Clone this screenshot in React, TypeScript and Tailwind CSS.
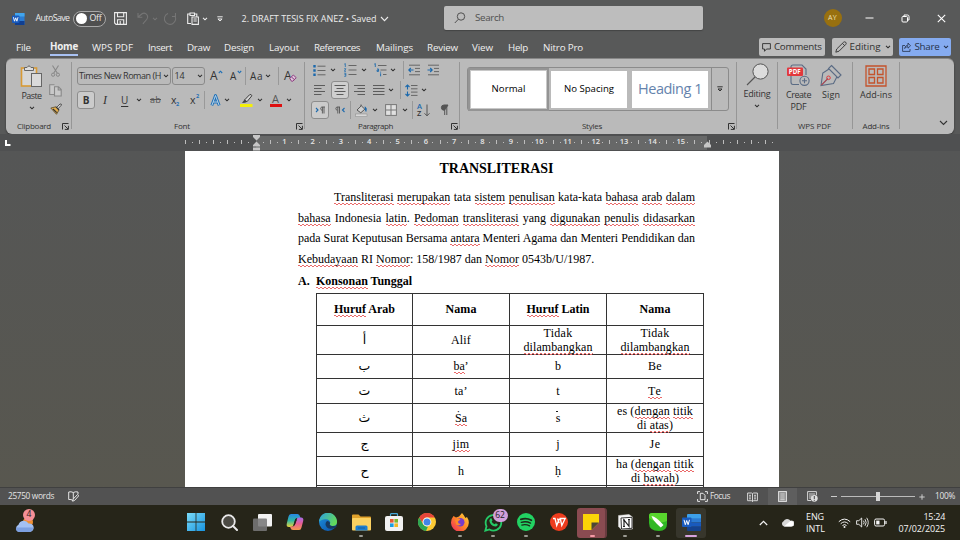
import { useLayoutEffect, useRef, useState } from 'react';
import type { ReactNode } from 'react';

const UI = "font-['Open_Sans','Noto_Sans',sans-serif]";

/* A single line of text whose tracking is adjusted so that it spans w pixels. */
function Fit({ w, className = '', children }: { w: number; className?: string; children: ReactNode }) {
  const ref = useRef<HTMLSpanElement>(null);
  const [spacing, setSpacing] = useState(0);
  useLayoutEffect(() => {
    const el = ref.current;
    if (!el) return;
    const n = (el.textContent || '').length;
    if (n > 0) setSpacing((w - el.getBoundingClientRect().width) / n);
  }, [w]);
  return (
    <span ref={ref} className={`inline-block shrink-0 whitespace-pre ${className}`} style={{ letterSpacing: spacing }}>
      {children}
    </span>
  );
}

function Svg({ w, h, className = '', children }: { w: number; h: number; className?: string; children: ReactNode }) {
  return (
    <svg width={w} height={h} viewBox={`0 0 ${w} ${h}`} fill="none" className={`block shrink-0 ${className}`}>
      {children}
    </svg>
  );
}

function Chev({ className = '' }: { className?: string }) {
  return (
    <Svg w={6} h={4} className={className}>
      <path d="M1 .8 3 2.8 5 .8" stroke="currentColor" strokeWidth="1.1" />
    </Svg>
  );
}

function Launcher({ className = '' }: { className?: string }) {
  return (
    <Svg w={7} h={7} className={className}>
      <path d="M.5 6.5V.5H6.5M2.5 2.5 6 6M6.4 2.8V6.4H2.8" stroke="#333" strokeWidth="1" />
    </Svg>
  );
}

const Divider = () => <div className="mt-[3px] h-[67px] w-px shrink-0 bg-[#969696]" />;

function TitleBar() {
  return (
    <div className="flex h-[37px] items-center text-[#ececec]">
      <Svg w={13} h={12} className="ml-[12px]">
        <rect x="3" y="0" width="9.5" height="12" rx="1" fill="#2b7cd3" />
        <rect x="3" y="0" width="9.5" height="3.5" fill="#41a5ee" />
        <rect x="3" y="8" width="9.5" height="4" fill="#103f91" />
        <rect x="0" y="2.5" width="7.5" height="7.5" rx="1" fill="#185abd" />
        <path d="M1.4 4.2 2.5 8.2 3.7 4.8 4.9 8.2 6 4.2" stroke="#fff" strokeWidth=".9" />
      </Svg>
      <Fit w={34} className="ml-[10.5px] text-[8.8px]">AutoSave</Fit>
      <div className="ml-[3px] flex h-[16px] w-[33px] shrink-0 items-center rounded-full border border-[#a8a8a8] bg-[#4f4f4f] pl-[2px]">
        <div className="h-[11px] w-[11px] shrink-0 rounded-full bg-white" />
        <Fit w={12} className="ml-[3px] text-[8.8px]">Off</Fit>
      </div>
      <Svg w={13} h={13} className="ml-[8px]">
        <path d="M.6 .6H12.4V12.4H2L.6 11ZM3.5.6V4.8H9.7V.6M3.5 12.4V7.8H9.7V12.4M6.2 9v3" stroke="currentColor" strokeWidth="1.1" />
      </Svg>
      <Svg w={12} h={13} className="ml-[10px] text-[#757575]">
        <path d="M1 1V5.3H5.3M1.2 5 4.7 2C8-.5 11 3 10.6 5.5 10.3 8 7 9.5 6 12" stroke="currentColor" strokeWidth="1.1" />
      </Svg>
      <Chev className="ml-[3px] text-[#757575]" />
      <Svg w={13} h={13} className="ml-[6px] text-[#757575]">
        <path d="M11.5 1V4.5H8M4 1.5A5.6 5.6 0 1 0 10.8 3.8" stroke="currentColor" strokeWidth="1.1" />
      </Svg>
      <Svg w={12} h={13} className="ml-[10px]">
        <path d="M4 11.5H.7V2H3M7.5 2H9.8V4.5M3 1H7.5V3.5H3ZM5 5H11.4V12.4H5ZM6.5 7H9.8M6.5 9H9.8" stroke="currentColor" strokeWidth="1.1" />
      </Svg>
      <Chev className="ml-[3px]" />
      <Svg w={6} h={6} className="ml-[9.5px]">
        <path d="M.3.8H5.7M.9 3 3 5 5.1 3Z" stroke="currentColor" strokeWidth="1" />
      </Svg>
      <Fit w={135} className="ml-[18.5px] text-[9px]">2. DRAFT TESIS FIX ANEZ • Saved</Fit>
      <Svg w={9} h={6} className="ml-[3px]">
        <path d="M1 1 4.5 4.6 8 1" stroke="currentColor" strokeWidth="1.1" />
      </Svg>
      <div className="mb-px ml-[55px] flex h-[24px] w-[259px] shrink-0 items-center rounded-[2px] bg-[#bdbdbd] text-[#505050] shadow-[0_1px_1px_#444]">
        <Svg w={12} h={12} className="ml-[10px]">
          <circle cx="7" cy="4.5" r="3.7" stroke="currentColor" />
          <path d="M4.3 7.3.8 11" stroke="currentColor" />
        </Svg>
        <Fit w={29} className="ml-[9.5px] text-[9.8px]">Search</Fit>
      </div>
      <div className="mb-px ml-[121px] flex h-[18px] w-[18px] items-center justify-center rounded-full bg-[#98700f] text-[#eee0b8]">
        <Fit w={9} className="text-[7px]">AY</Fit>
      </div>
      <Svg w={9} h={9} className="ml-[23px]">
        <path d="M.5 4H8.5" stroke="#fff" />
      </Svg>
      <Svg w={9} h={9} className="ml-[27.5px]">
        <rect x="1" y="2.5" width="5.5" height="5.5" rx="1" stroke="#fff" />
        <path d="M3 2V1H6.5Q8 1 8 2.5V6H7" stroke="#fff" />
      </Svg>
      <Svg w={9} h={9} className="ml-[26.5px]">
        <path d="M.8.8 8.2 8.2M8.2.8.8 8.2" stroke="#fff" strokeWidth="1.1" />
      </Svg>
    </div>
  );
}

function Tabs() {
  const tab = 'text-[9.8px]';
  return (
    <div className="flex h-[22px] items-center text-[#f0f0f0]">
      <Fit w={15} className={`ml-[16px] ${tab}`}>File</Fit>
      <div className="mb-[2px] ml-[19px] flex h-[17px] flex-col justify-end">
        <Fit w={28} className="text-[9.8px] leading-[14px] font-bold">Home</Fit>
        <div className="h-[1.5px] w-[28px] bg-[#a9c2f3]" />
      </div>
      <Fit w={41} className={`ml-[14px] ${tab}`}>WPS PDF</Fit>
      <Fit w={24} className={`ml-[15px] ${tab}`}>Insert</Fit>
      <Fit w={23} className={`ml-[15px] ${tab}`}>Draw</Fit>
      <Fit w={30} className={`ml-[14px] ${tab}`}>Design</Fit>
      <Fit w={30} className={`ml-[15px] ${tab}`}>Layout</Fit>
      <Fit w={46} className={`ml-[15px] ${tab}`}>References</Fit>
      <Fit w={37} className={`ml-[16px] ${tab}`}>Mailings</Fit>
      <Fit w={31} className={`ml-[14px] ${tab}`}>Review</Fit>
      <Fit w={21} className={`ml-[14px] ${tab}`}>View</Fit>
      <Fit w={20} className={`ml-[15px] ${tab}`}>Help</Fit>
      <Fit w={40} className={`ml-[15px] ${tab}`}>Nitro Pro</Fit>
      <div className="mb-[2px] ml-[175.5px] flex h-[18px] w-[66.5px] shrink-0 items-center rounded-[2px] bg-[#bcbcbc] text-[#303030]">
        <Svg w={9} h={9} className="ml-[3.5px]">
          <path d="M.6.6H8.4V6H4.5L2.5 8.3V6H.6Z" stroke="currentColor" strokeWidth=".9" />
        </Svg>
        <Fit w={47.5} className="ml-[3px] text-[9.8px]">Comments</Fit>
      </div>
      <div className="mb-[2px] ml-[6.5px] flex h-[18px] w-[61.5px] shrink-0 items-center rounded-[2px] bg-[#bcbcbc] text-[#303030]">
        <Svg w={12} h={12} className="ml-[3px]">
          <path d="M.8 11.2 1.7 8 8.5 1.3Q9.7.3 10.8 1.3 11.7 2.4 10.7 3.5L4 10.2ZM7.5 2.5 9.7 4.6" stroke="currentColor" strokeWidth=".9" />
        </Svg>
        <Fit w={31} className="ml-[3px] text-[9.8px]">Editing</Fit>
        <Chev className="ml-[4px]" />
      </div>
      <div className="mb-[2px] ml-[6px] flex h-[18px] w-[52px] shrink-0 items-center rounded-[2px] bg-[#85abf0] text-[#26324a]">
        <Svg w={9} h={10} className="ml-[3px]">
          <path d="M3 3.5H.6V9.4H8V7M2.7 6.5C3 4.3 4.3 3.3 6 3.2V1L8.5 3.8 6 6.2V4.7C4.6 4.7 3.5 5.3 2.7 6.5Z" stroke="currentColor" strokeWidth=".8" />
        </Svg>
        <Fit w={25} className="ml-[3.5px] text-[9.8px]">Share</Fit>
        <Chev className="ml-[3.5px]" />
      </div>
    </div>
  );
}

function Clipboard() {
  return (
    <div className="flex w-[65px] shrink-0 flex-col">
      <div className="flex h-[60px]">
        <div className="ml-[14px] flex w-[23px] flex-col items-center pt-[5px]">
          <Svg w={23} h={25}>
            <rect x="1.5" y="4" width="15" height="18" fill="#d6d6d6" stroke="#d89a35" strokeWidth="1.6" />
            <path d="M4.5 6.5V3.5H7Q9 .3 11 3.5H13.5V6.5Z" fill="#ddd" stroke="#666" />
            <rect x="11.5" y="9.5" width="10" height="13" fill="#dadada" stroke="#666" />
          </Svg>
          <Fit w={20} className="mt-[1px] text-[9px] leading-[12px]">Paste</Fit>
          <Chev className="mt-[4px]" />
        </div>
        <div className="ml-[6px] flex w-[13px] flex-col items-center">
          <Svg w={9} h={12} className="mt-[6px]">
            <path d="M1.5.5 6.2 8M7.5.5 2.8 8" stroke="#888" strokeWidth="1.1" />
            <circle cx="2.1" cy="9.7" r="1.6" stroke="#888" />
            <circle cx="6.9" cy="9.7" r="1.6" stroke="#888" />
          </Svg>
          <Svg w={13} h={13} className="mt-[7px]">
            <path d="M5 10.5H.7V.7H5.5M5.5 2.7H9.5L12.2 5.5V12H5.5ZM9.2 3V6H12" stroke="#888" strokeWidth="1.1" fill="#c9c9c9" />
          </Svg>
          <Svg w={12} h={12} className="mt-[6px]">
            <path d="M6.8 4.3 10 1Q11.5.5 11.5 2L8.2 5.6" fill="#ddd" stroke="#444" strokeWidth=".9" />
            <path d="M.8 5 6 3.8 9 7 6.5 11.3Z" fill="#e2ad4d" stroke="#5b4a28" strokeWidth=".8" />
            <path d="M3 6 6.8 9.7M6 3.8 9 7" stroke="#333" strokeWidth="1.1" />
          </Svg>
        </div>
      </div>
      <div className="flex h-[14px] items-center">
        <Fit w={34} className="ml-[11px] text-[8px]">Clipboard</Fit>
        <Launcher className="ml-[11px]" />
      </div>
    </div>
  );
}

function FontGroup() {
  return (
    <div className="flex w-[232px] shrink-0 flex-col pt-[8px]">
      <div className="flex h-[18px] items-center">
        <div className="ml-[5px] flex h-[18px] w-[94px] shrink-0 items-center rounded-[3px] border border-[#8a8a8a]">
          <Fit w={82} className="ml-[1px] text-[9px]">Times New Roman (H</Fit>
          <Chev className="ml-[2px]" />
        </div>
        <div className="ml-[1px] flex h-[18px] w-[33px] shrink-0 items-center rounded-[3px] border border-[#8a8a8a]">
          <Fit w={10} className="ml-[1.5px] text-[9px]">14</Fit>
          <Chev className="ml-[12.5px]" />
        </div>
        <Fit w={8} className="ml-[5px] text-[12px]">A</Fit>
        <Svg w={5} h={4} className="mb-[9px]"><path d="M.8 3 2.5 1.2 4.2 3" stroke="#1f6fb5" strokeWidth="1.1" /></Svg>
        <Fit w={7} className="ml-[7px] pt-[1px] text-[10px]">A</Fit>
        <Svg w={5} h={4} className="mb-[9px]"><path d="M.8 1 2.5 2.8 4.2 1" stroke="#1f6fb5" strokeWidth="1.1" /></Svg>
        <div className="ml-[3px] h-[18px] w-px bg-[#999]" />
        <Fit w={13} className="ml-[4px] text-[10px]">Aa</Fit>
        <Chev className="ml-[2px]" />
        <div className="ml-[7px] h-[18px] w-px bg-[#999]" />
        <Fit w={7} className="ml-[5px] pb-[1px] text-[12px]">A</Fit>
        <Svg w={8} h={8} className="mt-[4px] -ml-[2px]">
          <path d="M.8 4.5 4.3 1 7.2 3.7 3.8 7.2H2.5Z" fill="#dcc5d9" stroke="#8d3a80" />
          <path d="M2.5 3 5.5 5.7" stroke="#8d3a80" />
        </Svg>
      </div>
      <div className="mt-[6px] flex h-[18px] items-center">
        <div className="ml-[5px] flex h-[18px] w-[18px] shrink-0 items-center justify-center rounded-[3px] border border-[#8d8d8d] bg-[#cbcbcb] text-[10px] font-bold">B</div>
        <span className="ml-[8px] w-[5px] font-['Liberation_Serif',serif] text-[12px] italic">I</span>
        <span className="ml-[13px] w-[8px] text-[10px] underline underline-offset-2">U</span>
        <Chev className="ml-[7px]" />
        <Fit w={11} className="ml-[8px] text-[9px] text-[#555] line-through">ab</Fit>
        <span className="ml-[10px] w-[5px] text-[10.5px] leading-[14px]">x</span>
        <span className="mt-[8px] w-[4px] text-[5.5px] font-bold text-[#1f6fb5]">2</span>
        <span className="ml-[10px] w-[6px] text-[10.5px] leading-[14px]">x</span>
        <span className="mb-[8px] w-[4px] text-[5.5px] font-bold text-[#1f6fb5]">2</span>
        <div className="ml-[4px] h-[18px] w-px bg-[#999]" />
        <Svg w={11} h={13} className="ml-[5px]">
          <path d="M1.8 11.5 5.5 1.5 9.2 11.5M3.2 8H7.8" stroke="#1c6fb8" strokeWidth="2.8" strokeLinejoin="round" />
          <path d="M1.8 11.5 5.5 1.5 9.2 11.5M3.2 8H7.8" stroke="#c9dbe9" strokeWidth=".9" strokeLinejoin="round" />
        </Svg>
        <Chev className="ml-[3px]" />
        <Svg w={13} h={13} className="ml-[10px]">
          <path d="M4.5 6 9.5.8Q11.4-.3 11.8 1.8L7 7.7Z" fill="#d6d6d6" stroke="#3c3c3c" />
          <path d="M4.3 5.8 7.2 7.8 5 8.7 2 9Z" fill="#444" />
          <rect x="0" y="10" width="12.5" height="3" fill="#f4ef08" />
        </Svg>
        <Chev className="ml-[4px]" />
        <div className="ml-[6px] flex h-[14px] w-[13px] flex-col items-center justify-end">
          <span className="text-[11px] leading-[10px] text-[#555]">A</span>
          <div className="h-[3px] w-[12px] bg-[#de1010]" />
        </div>
        <Chev className="ml-[4px]" />
      </div>
      <div className="mt-[10px] flex h-[14px] items-center">
        <Fit w={16} className="ml-[102px] text-[8px]">Font</Fit>
        <Launcher className="ml-[106px]" />
      </div>
    </div>
  );
}

const Lines = ({ d }: { d: string }) => (
  <Svg w={12} h={12}>
    <path d={d} stroke="#5c5c5c" strokeWidth="1" />
  </Svg>
);

function ParagraphGroup() {
  return (
    <div className="flex w-[154px] shrink-0 flex-col pt-[2px]">
      <div className="flex h-[18px] items-center">
        <Svg w={13} h={13} className="ml-[8px]">
          <path d="M4.5 2.2H12.5M4.5 6.5H12.5M4.5 10.8H12.5" stroke="#666" />
          <path d="M.3 1h2.4v2.4H.3ZM.3 5.3h2.4v2.4H.3ZM.3 9.6h2.4V12H.3Z" fill="#1b69ad" />
        </Svg>
        <Chev className="ml-[4px]" />
        <Svg w={13} h={14} className="ml-[8px]">
          <path d="M4.5 2.5H12.5M4.5 7H12.5M4.5 11.5H12.5" stroke="#666" />
          <path d="M.3 1.2 1.3.5V4M.2 5.7H1.8L.4 8.3H2M.2 10.2H1.8V13.3H.2M.5 11.6H1.8" stroke="#1b69ad" strokeWidth=".8" />
        </Svg>
        <Chev className="ml-[4px]" />
        <Svg w={13} h={14} className="ml-[7px]">
          <path d="M4 2.5H12.5M6.5 7H12.5M9 11.5H12.5" stroke="#666" />
          <path d="M.3 1.2 1.3.5V4M3 6H4.6V8.4H3V7.2H4.6M6.6 10.3V13.3M6.6 8.7v.9" stroke="#1b69ad" strokeWidth=".9" />
        </Svg>
        <Chev className="ml-[3px]" />
        <div className="ml-[7px] h-[18px] w-px bg-[#999]" />
        <Svg w={12} h={12} className="ml-[4px]">
          <path d="M1 1.2H12M7 4.4H12M7 7.6H12M1 10.8H12" stroke="#666" />
          <path d="M5.5 6H.8M2.8 4 .8 6l2 2" stroke="#1b69ad" strokeWidth="1.1" />
        </Svg>
        <Svg w={12} h={12} className="ml-[7px]">
          <path d="M1 1.2H12M7 4.4H12M7 7.6H12M1 10.8H12" stroke="#666" />
          <path d="M.5 6H5.2M3.2 4l2 2-2 2" stroke="#1b69ad" strokeWidth="1.1" />
        </Svg>
      </div>
      <div className="mt-[2px] flex h-[18px] items-center">
        <div className="w-[9px]" />
        <Lines d="M0 1.5H11M0 4.5H7.5M0 7.5H11M0 10.5H7.5" />
        <div className="ml-[5px] flex h-[18px] w-[18px] items-center justify-center rounded-[3px] border border-[#8d8d8d] bg-[#cfcfcf]">
          <Lines d="M.5 1.5H11.5M2.5 4.5H9.5M.5 7.5H11.5M2.5 10.5H9.5" />
        </div>
        <div className="w-[4px]" />
        <Lines d="M1 1.5H12M4.5 4.5H12M1 7.5H12M4.5 10.5H12" />
        <div className="w-[8px]" />
        <Lines d="M0 1.5H11.5M0 4.5H11.5M0 7.5H11.5M0 10.5H11.5" />
        <Chev className="ml-[3px]" />
        <div className="ml-[6px] h-[18px] w-px bg-[#999]" />
        <Svg w={13} h={13} className="ml-[4px]">
          <path d="M6 1.5H12.5M6 4.8H12.5M6 8.1H12.5M6 11.4H12.5" stroke="#666" />
          <path d="M2.5 1V5.5M.5 3 2.5 1 4.5 3M2.5 7.5V12M.5 10 2.5 12 4.5 10" stroke="#1b69ad" strokeWidth="1.1" />
        </Svg>
        <Chev className="ml-[3px]" />
      </div>
      <div className="mt-[2px] flex h-[18px] items-center">
        <div className="ml-[6px] flex h-[18px] w-[18px] items-center justify-center rounded-[3px] border border-[#8d8d8d] bg-[#cbcbcb]">
          <Svg w={11} h={8}>
            <path d="M1 2 3 4 1 6" stroke="#1b69ad" strokeWidth="1.1" />
            <path d="M10 1H6.8A1.7 1.7 0 0 0 6.8 4.2H7.2M7.4 1V7.5M9 1V7.5" stroke="#555" strokeWidth=".9" />
          </Svg>
        </div>
        <Svg w={11} h={8} className="ml-[6px]">
          <path d="M9.5 2 7.5 4 9.5 6" stroke="#1b69ad" strokeWidth="1.1" />
          <path d="M5 1H2A1.7 1.7 0 0 0 2 4.2H2.4M2.8 1V7.5M4.5 1V7.5" stroke="#555" strokeWidth=".9" />
        </Svg>
        <div className="ml-[4px] h-[18px] w-px bg-[#999]" />
        <Svg w={13} h={13} className="ml-[4px]">
          <path d="M2 6 6.3 1.8 9.8 5.2 5.8 8.8ZM6 2V.5" fill="#d0d0d0" stroke="#555" />
          <path d="M10 2.8Q12.3 4 11 7.5L10 5.5Z" fill="#1b69ad" stroke="#1b69ad" strokeWidth=".6" />
          <rect x=".5" y="10" width="11.5" height="2.6" fill="#d8d8d8" stroke="#888" strokeWidth=".5" />
        </Svg>
        <Chev className="ml-[4px]" />
        <Svg w={12} h={12} className="ml-[7px]">
          <rect x=".6" y=".6" width="10.8" height="10.8" fill="#e0e0e0" stroke="#777" />
          <path d="M6 1V11M1 6H11" stroke="#777" />
        </Svg>
        <Chev className="ml-[5px]" />
        <div className="ml-[4px] h-[18px] w-px bg-[#999]" />
        <div className="ml-[4px] flex w-[7px] flex-col text-[7.5px] leading-[7px] font-semibold">
          <span className="text-[#1b69ad]">A</span>
          <span>Z</span>
        </div>
        <Svg w={6} h={13}><path d="M3 .5V12M.5 9.3 3 11.8 5.5 9.3" stroke="#555" /></Svg>
        <Svg w={9} h={12} className="ml-[10px]">
          <path d="M8 1H4A2.6 2.6 0 0 0 4 6.2H4.5ZM4.7 1V11M6.8 1V11" fill="#555" stroke="#555" />
        </Svg>
      </div>
      <div className="flex h-[14px] items-center">
        <Fit w={35} className="ml-[53px] text-[8px]">Paragraph</Fit>
        <Launcher className="ml-[58px]" />
      </div>
    </div>
  );
}

function StylesGroup() {
  return (
    <div className="flex w-[276px] shrink-0 flex-col pt-[8px]">
      <div className="ml-[7px] flex h-[44px] w-[262px] items-center rounded-[3px] border border-[#8b8b8b]">
        <div className="flex h-[43px] w-[81px] shrink-0 items-center justify-center border-[2px] border-[#949494] bg-[#c8c8c8]">
          <div className="flex h-[37px] w-[75px] items-center justify-center bg-white text-black">
            <Fit w={34} className="text-[9.6px]">Normal</Fit>
          </div>
        </div>
        <div className="ml-[2px] flex h-[37px] w-[76px] shrink-0 items-center justify-center bg-white text-black">
          <Fit w={50} className="text-[9.6px]">No Spacing</Fit>
        </div>
        <div className="ml-[5px] flex h-[37px] w-[76px] shrink-0 items-center justify-center bg-white text-[#6583ad]">
          <Fit w={64} className="text-[14.5px]">Heading 1</Fit>
        </div>
        <div className="ml-[3px] flex h-[42px] w-[17px] items-center justify-center border-l border-[#8b8b8b]">
          <Svg w={6} h={6}><path d="M.3.8H5.7M1 3 3 5 5 3Z" stroke="#333" strokeWidth="1" /></Svg>
        </div>
      </div>
      <div className="mt-[8px] flex h-[14px] items-center">
        <Fit w={20} className="ml-[122px] text-[8px]">Styles</Fit>
        <Launcher className="ml-[125.5px]" />
      </div>
    </div>
  );
}

function Ribbon() {
  return (
    <div className="mx-[6px] flex h-[75px] rounded-[6px] bg-[#bababa] text-[#333] shadow-[0_1px_2px_#333,0_-1px_0_#8d8d8d]">
      <Clipboard />
      <Divider />
      <FontGroup />
      <Divider />
      <ParagraphGroup />
      <Divider />
      <StylesGroup />
      <Divider />
      <div className="flex w-[40px] shrink-0 flex-col items-center">
        <Svg w={23} h={23} className="mt-[4px]">
          <circle cx="14.5" cy="8.5" r="7.6" fill="#dcdcdc" stroke="#555" />
          <path d="M9 14 1 22" stroke="#555" strokeWidth="1.1" />
        </Svg>
        <Fit w={27} className="mt-[2px] text-[9px] leading-[12px]">Editing</Fit>
        <Chev className="mt-[4px]" />
      </div>
      <Divider />
      <div className="flex w-[74px] shrink-0 flex-col">
        <div className="flex h-[60px]">
          <div className="ml-[7px] flex w-[27px] flex-col items-center pt-[5px]">
            <Svg w={23} h={23}>
              <path d="M4 4V3Q4 1 6 1H15L19 5V11M4 12V18Q4 20.5 6 20.5H12" stroke="#5a6b84" strokeWidth="1.1" />
              <circle cx="17.5" cy="16.8" r="4.6" stroke="#5a6b84" strokeWidth="1.1" />
              <path d="M17.5 14.3V19.3M15 16.8H20" stroke="#5a6b84" strokeWidth="1.1" />
              <rect x="0" y="3.5" width="16" height="8.5" rx="1" fill="#e2393c" />
              <text x="1.8" y="10" fontSize="6.2" fontWeight="700" fill="#fff" fontFamily="Open Sans">PDF</text>
            </Svg>
            <Fit w={25} className="mt-[2px] text-[9px] leading-[12px]">Create</Fit>
            <Fit w={16} className="text-[9px] leading-[12px]">PDF</Fit>
          </div>
          <div className="ml-[8px] flex w-[22px] flex-col items-center pt-[5px]">
            <Svg w={22} h={23}>
              <path d="M11.5 1.5 21 11 18 14 8.5 4.5ZM9 5 2.8 9 1 21.5 13.5 19.5 16.8 13M1.5 21 8 14.5" stroke="#5a6b84" strokeWidth="1.1" />
              <circle cx="8.5" cy="13.8" r="1.8" stroke="#e2393c" />
              <path d="M7.2 15.2 1.3 21.2" stroke="#e2393c" />
            </Svg>
            <Fit w={18} className="mt-[2px] text-[9px] leading-[12px]">Sign</Fit>
          </div>
        </div>
        <Fit w={33} className="ml-[20px] self-start text-[8px] leading-[14px]">WPS PDF</Fit>
      </div>
      <Divider />
      <div className="flex w-[46px] shrink-0 flex-col items-center">
        <Svg w={22} h={22} className="mt-[6px]">
          <path d="M1 1H21V21H1ZM4 4H9.5V9.5H4ZM12.5 4H18V9.5H12.5ZM4 12.5H9.5V18H4ZM12.5 12.5H18V18H12.5Z" stroke="#c4532c" strokeWidth="1.3" />
        </Svg>
        <Fit w={32} className="mt-[2px] text-[9px] leading-[12px]">Add-ins</Fit>
        <Fit w={27} className="mt-[18px] text-[8px] leading-[14px]">Add-ins</Fit>
      </div>
      <Divider />
      <Svg w={9} h={6} className="mt-[61px] ml-[39px]">
        <path d="M1 1 4.5 4.5 8 1" stroke="#333" strokeWidth="1.1" />
      </Svg>
    </div>
  );
}

function Ruler() {
  return (
    <div className="relative flex h-[17px] items-center overflow-hidden bg-[#4f5051]">
      <Svg w={6} h={6} className="ml-[5px]"><path d="M1 0V5H5.5" stroke="#fff" strokeWidth="2" /></Svg>
      <div className="ml-[245px] h-[14px] w-[451px] shrink-0 bg-[#676868]" />
      <div className="absolute top-0 left-[181.7px] flex h-[16px] items-center">
        {Array.from({ length: 84 }, (_, k) => {
          const q = k - 10;
          const label = q > 0 && q % 4 === 0 && q <= 60;
          return (
            <div key={k} className="flex h-[14px] w-[7.0875px] shrink-0 items-center justify-center text-[7.5px] font-semibold text-[#e6e6e6]">
              {label ? <span>{q / 4}</span> : q === 0 ? null : k % 2 === 0 ? <div className="h-[4px] w-px bg-[#bdbdbd]" /> : <div className="h-px w-px bg-[#bdbdbd]" />}
            </div>
          );
        })}
      </div>
      <Svg w={8} h={17} className="absolute top-0 left-[252.5px]">
        <path d="M0 1H7V3L3.5 6.5 0 3ZM3.5 7.5 7 11V12.5H0V11ZM0 13.5H7V16.5H0Z" fill="#c6c6c6" />
      </Svg>
      <Svg w={8} h={17} className="absolute top-0 left-[703.5px]">
        <path d="M3.5 7.5 7 11V13.5H0V11Z" fill="#c6c6c6" />
      </Svg>
    </div>
  );
}

/* A word flagged by the spelling checker: two offset rows of dashes make the squiggle. */
const S = ({ children }: { children: ReactNode }) => (
  <span className="bg-[linear-gradient(90deg,#ea6a6a_50%,transparent_50%),linear-gradient(90deg,transparent_50%,#ea6a6a_50%)] [background-size:4px_1px] [background-position:0_calc(100%-1px),0_100%] bg-repeat-x pb-[1px]">{children}</span>
);

const cell = 'flex flex-col items-center justify-center border-r border-b border-[#333] text-center';

function Row({ className, cells }: { className: string; cells: ReactNode[] }) {
  return (
    <div className={`grid shrink-0 grid-cols-[96px_97px_97px_97px] text-[12px] leading-[14px] ${className}`}>
      {cells.map((c, i) => (
        <div key={i} className={cell}>{c}</div>
      ))}
    </div>
  );
}

const Ar = ({ children }: { children: ReactNode }) => (
  <span className="font-['DejaVu_Sans',sans-serif] text-[12.5px]" lang="ar">{children}</span>
);

function Page() {
  return (
    <div className="ml-[185px] flex h-[336px] w-[594px] flex-col overflow-hidden bg-white pl-[113px] font-['Liberation_Serif',serif] text-[12px] text-black">
      <div className="mt-[8px] flex h-[18px] w-[397px] shrink-0 items-center justify-center">
        <Fit w={114} className="text-[14px] font-bold">TRANSLITERASI</Fit>
      </div>
      <div className="mt-[10px] flex w-[397px] shrink-0 flex-col leading-[20.7px] whitespace-nowrap [text-align-last:justify]">
        <div className="pl-[36px]"><S>Transliterasi</S> <S>merupakan</S> tata <S>sistem</S> <S>penulisan</S> kata-kata <S>bahasa</S> <S>arab</S> <S>dalam</S></div>
        <div><S>bahasa</S> Indonesia <S>latin</S>. <S>Pedoman</S> <S>transliterasi</S> yang <S>digunakan</S> <S>penulis</S> <S>didasarkan</S></div>
        <div className="tracking-[-0.04px]">pada Surat Keputusan Bersama <S>antara</S> Menteri Agama dan Menteri Pendidikan dan</div>
        <div className="w-[296px]"><S>Kebudayaan</S> RI <S>Nomor</S>: 158/1987 dan <S>Nomor</S> 0543b/U/1987.</div>
      </div>
      <div className="mt-[1px] flex h-[20px] shrink-0 items-center font-bold">
        <Fit w={12}>A.</Fit>
        <Fit w={96} className="ml-[6px]"><S>Konsonan</S> Tunggal</Fit>
      </div>
      <div className="mt-[2px] ml-[18px] flex w-[388px] shrink-0 flex-col border-t border-l border-[#333]">
        <Row className="h-[32px] font-bold" cells={[
          <Fit w={61}><S>Huruf</S> Arab</Fit>, <Fit w={31}>Nama</Fit>, <Fit w={63}><S>Huruf</S> Latin</Fit>, <Fit w={31}>Nama</Fit>]} />
        <Row className="h-[29px]" cells={[
          <Ar>أ</Ar>, <Fit w={20}>Alif</Fit>,
          <><Fit w={29}>Tidak</Fit><Fit w={69}><S>dilambangkan</S></Fit></>,
          <><Fit w={29}>Tidak</Fit><Fit w={69}><S>dilambangkan</S></Fit></>]} />
        <Row className="h-[24px]" cells={[<Ar>ب</Ar>, <Fit w={15}><S>ba</S>’</Fit>, 'b', <Fit w={14}>Be</Fit>]} />
        <Row className="h-[25px]" cells={[<Ar>ت</Ar>, <Fit w={13}>ta’</Fit>, 't', <Fit w={14}><S>Te</S></Fit>]} />
        <Row className="h-[28px]" cells={[<Ar>ث</Ar>, <Fit w={12}><S>Ṡa</S></Fit>, <span className="flex flex-col items-center"><span className="h-[1.5px] w-[1.5px] -translate-x-[1px] rounded-full bg-black" /><span className="leading-[13px]">s</span></span>,
          <><Fit w={76}>es (<S>dengan</S> <S>titik</S></Fit><Fit w={36}>di <S>atas</S>)</Fit></>]} />
        <Row className="h-[25px]" cells={[<Ar>ج</Ar>, <Fit w={17}><S>jim</S></Fit>, 'j', <Fit w={11}>Je</Fit>]} />
        <Row className="h-[28px]" cells={[<Ar>ح</Ar>, 'h', 'ḥ',
          <><Fit w={78}>ha (<S>dengan</S> <S>titik</S></Fit><Fit w={48}>di <S>bawah</S>)</Fit></>]} />
        <Row className="h-[20px]" cells={['', '', '', '']} />
      </div>
    </div>
  );
}

function StatusBar() {
  return (
    <div className="flex h-[18px] items-center border-t border-[#404040] bg-[#525252] text-[#e4e4e4]">
      <Fit w={46} className="mb-px ml-[8px] text-[8.3px]">25750 words</Fit>
      <Svg w={11} h={11} className="ml-[14px]">
        <path d="M5.3 1.5V8M5.3 1.5Q3 .3.7 1V8.5Q3 8 5 9.5M5.3 1.5Q7.5.3 10 1V3M4.6 10.2 5.2 8 9.7 3.4 10.7 4.8 6.5 9.5Z" stroke="currentColor" strokeWidth="1" />
      </Svg>
      <Svg w={11} h={11} className="ml-[618px]">
        <path d="M3 .6H.6V3M8 .6H10.4V3M.6 8V10.4H3M10.4 8V10.4H8M3.3 2.3H6L8 4.3V8.7H3.3Z" stroke="currentColor" />
      </Svg>
      <Fit w={20} className="mb-px ml-[2px] text-[8.3px]">Focus</Fit>
      <Svg w={11} h={10} className="ml-[17px]">
        <path d="M5.5 1.5V9.5M.6 1H4.5L5.5 1.7 6.5 1H10.4V8.7H6.5L5.5 9.5 4.5 8.7H.6ZM2 3.3H4M2 5H4M2 6.8H4M7 3.3H9M7 5H9M7 6.8H9" stroke="currentColor" strokeWidth=".9" />
      </Svg>
      <div className="ml-[10px] flex h-[17px] w-[29px] shrink-0 items-center justify-center bg-[#5e5e5e]">
        <Svg w={9} h={11}>
          <rect x=".6" y=".6" width="7.8" height="9.8" fill="#8b8b8b" stroke="currentColor" />
          <path d="M2.3 3H6.7M2.3 5H6.7M2.3 7H6.7M2.3 8.7H6.7" stroke="currentColor" strokeWidth=".8" />
        </Svg>
      </div>
      <Svg w={11} h={11} className="ml-[10px]">
        <path d="M4 9.5H.6V.6H9.4V4M2 3H8M2 5H5M2 7H4" stroke="currentColor" strokeWidth=".9" />
        <circle cx="7.3" cy="7.3" r="3.4" fill="#dedede" />
        <path d="M7.3 5V8M7.3 8.8v1" stroke="#444" />
      </Svg>
      <div className="ml-[13px] h-px w-[6px] shrink-0 bg-[#ccc]" />
      <div className="ml-[4px] h-px w-[35px] shrink-0 bg-[#bbb]" />
      <div className="h-[9px] w-[4px] shrink-0 bg-[#d6d6d6]" />
      <div className="h-px w-[35px] shrink-0 bg-[#bbb]" />
      <Svg w={6} h={6} className="ml-[4px]"><path d="M3 .3V5.7M.3 3H5.7" stroke="#ccc" /></Svg>
      <Fit w={20} className="mb-px ml-[10px] text-[8.3px]">100%</Fit>
    </div>
  );
}

function TaskButton({ mark = '', className = '', children }: { mark?: string; className?: string; children: ReactNode }) {
  return (
    <div className="relative flex w-[33px] shrink-0 items-center justify-center">
      <div className={`flex h-[30px] w-[30px] items-center justify-center rounded-[3px] pb-px ${className}`}>{children}</div>
      {mark && <div className={`absolute bottom-[3px] h-[2px] rounded-full ${mark}`} />}
    </div>
  );
}

function Taskbar() {
  const dot = 'w-[4px] bg-[#9b9b93]';
  return (
    <div className="flex h-[35px] items-center bg-[#262519] text-[#f4f4f4]">
      <div className="relative ml-[15px] h-[24px] w-[22px] shrink-0">
        <Svg w={22} h={24} className="-mt-px">
          <circle cx="13" cy="12" r="5" fill="#ee8f34" />
          <path d="M4 22A3.8 3.8 0 0 1 3.5 14.8 5.5 5.5 0 0 1 13.5 13.5 4.3 4.3 0 1 1 14.5 22Z" fill="#a3c0f2" />
          <path d="M4 22A3.8 3.8 0 0 1 1 17.5H18A4 4 0 0 1 14.5 22Z" fill="#7da0e0" />
        </Svg>
        <div className="absolute top-[-2px] left-[8px] flex h-[12px] w-[12px] items-center justify-center rounded-full bg-[#f58f97] text-[8.5px] text-[#222]">4</div>
      </div>
      <div className="ml-[142.5px] flex h-[35px] shrink-0">
        <TaskButton>
          <Svg w={18} h={18}>
            <defs><linearGradient id="win" x1="0" y1="0" x2="1" y2="1"><stop stopColor="#7bdcf9" /><stop offset="1" stopColor="#1793df" /></linearGradient></defs>
            <path d="M0 0H8.6V8.6H0ZM9.4 0H18V8.6H9.4ZM0 9.4H8.6V18H0ZM9.4 9.4H18V18H9.4Z" fill="url(#win)" />
          </Svg>
        </TaskButton>
        <TaskButton>
          <Svg w={17} h={17}>
            <circle cx="7.5" cy="7.5" r="6.3" fill="#4b4a43" stroke="#e9e9e9" strokeWidth="1.8" />
            <path d="M12 12 16 16" stroke="#e9e9e9" strokeWidth="2" strokeLinecap="round" />
          </Svg>
        </TaskButton>
        <TaskButton>
          <Svg w={19} h={17}>
            <rect x="5" y="0" width="14" height="12.5" rx="1" fill="#f2f2f2" />
            <rect x="0" y="4.5" width="14" height="12.5" rx="1" fill="#777" fillOpacity=".88" />
          </Svg>
        </TaskButton>
        <TaskButton>
          <Svg w={18} h={18}>
            <defs>
              <linearGradient id="cp1" x1="0" y1="0" x2="0" y2="1"><stop stopColor="#2787e8" /><stop offset=".5" stopColor="#2fb8a5" /><stop offset="1" stopColor="#ead43b" /></linearGradient>
              <linearGradient id="cp2" x1="0" y1="0" x2="0" y2="1"><stop stopColor="#a76be8" /><stop offset=".5" stopColor="#ea5e92" /><stop offset="1" stopColor="#f39a4d" /></linearGradient>
            </defs>
            <path d="M5 1H11.5Q13.5 1 14 3.5L14.5 5H11Q9.5 5 9 7L7.5 12Q7 14 5 14H3Q0 14 .8 10.5L2.5 3.5Q3 1 5 1Z" fill="url(#cp1)" />
            <path d="M13 17H7Q5 17 4.3 14.5L4 13.5H6.5Q8.5 13.5 9 11.5L10.5 6.5Q11 4.5 13 4.5H15Q18 4.5 17.2 8L15.5 14.5Q15 17 13 17Z" fill="url(#cp2)" />
            <path d="M9.3 6 11 6.5 8.8 12 7.5 12Z" fill="#262519" />
          </Svg>
        </TaskButton>
        <TaskButton>
          <Svg w={18} h={18}>
            <defs>
              <linearGradient id="ed1" x1="0" y1="0" x2="1" y2=".5"><stop stopColor="#2b9fe6" /><stop offset="1" stopColor="#63d95a" /></linearGradient>
              <linearGradient id="ed2" x1="0" y1="0" x2="1" y2="1"><stop stopColor="#1c93df" /><stop offset="1" stopColor="#0c4da5" /></linearGradient>
            </defs>
            <circle cx="9" cy="9" r="9" fill="url(#ed2)" />
            <path d="M0 8A9 9 0 0 1 18 9.5C18 12 16 13 13.5 13 11 13 10 12 11 10.5 12 8.5 10 6.3 7 6.3 3.5 6.3.5 8 0 9Z" fill="url(#ed1)" />
            <path d="M8 8Q5 11 8 14.5 11 17 17 14.5L18 12.5Q15 13.3 12.5 13 10 12 11 10.5 11 8.5 8 8Z" fill="#173a60" />
          </Svg>
        </TaskButton>
        <TaskButton mark={dot}>
          <Svg w={19} h={17}>
            <path d="M0 1.5Q0 .5 1 .5H6.5L8.5 2.5H18Q19 2.5 19 3.5V15.5H0Z" fill="#e0a22c" />
            <rect x="0" y="4" width="19" height="12.5" rx="1" fill="#fad161" />
            <path d="M3.5 16.5V13Q3.5 11.5 5 11.5H14Q15.5 11.5 15.5 13V16.5Z" fill="#1c7ed0" />
            <path d="M6 14H13" stroke="#165e9c" />
          </Svg>
        </TaskButton>
        <TaskButton>
          <Svg w={18} h={18}>
            <path d="M5.5 4V1.5Q5.5.7 6.3.7H11.7Q12.5.7 12.5 1.5V4" stroke="#45a8d9" strokeWidth="1.2" />
            <rect x="0" y="3" width="18" height="15" rx="2" fill="#f1f1f1" />
            <path d="M5 6H8.6V9.6H5Z" fill="#e55934" /><path d="M9.4 6H13V9.6H9.4Z" fill="#7cb82f" />
            <path d="M5 10.4H8.6V14H5Z" fill="#1a9ee2" /><path d="M9.4 10.4H13V14H9.4Z" fill="#f4b823" />
          </Svg>
        </TaskButton>
        <TaskButton>
          <Svg w={18} h={18}>
            <circle cx="9" cy="9" r="9" fill="#fbc934" />
            <path d="M1.2 4.5A9 9 0 0 1 16.8 4.5H9A4.5 4.5 0 0 0 5.1 11.2Z" fill="#e5453a" />
            <path d="M1.2 4.5 5.1 11.2A4.5 4.5 0 0 0 10 13.4L8 18A9 9 0 0 1 1.2 4.5Z" fill="#2da653" />
            <circle cx="9" cy="9" r="4.4" fill="#fff" /><circle cx="9" cy="9" r="3.5" fill="#4285e8" />
          </Svg>
        </TaskButton>
        <TaskButton mark={dot}>
          <Svg w={18} h={18}>
            <defs><linearGradient id="ff" x1="1" y1="0" x2="0" y2="1"><stop stopColor="#ffdb3d" /><stop offset=".5" stopColor="#ff8427" /><stop offset="1" stopColor="#ec2166" /></linearGradient></defs>
            <path d="M2.5 3 5 4.5 8 3.5 11 0Q13 2.2 14.5 5L16 4Q18 7 17.8 10A8.9 8.9 0 0 1 0 9.5Q.2 5.5 2.5 3Z" fill="url(#ff)" />
            <circle cx="9.3" cy="9.3" r="4.2" fill="#773ccb" />
            <path d="M4 7Q8 4.5 9.5 6.5L7 8.5Q7 11 10 11 8 13.5 5.2 11.5Z" fill="#fb8b2c" />
          </Svg>
        </TaskButton>
        <TaskButton mark={dot}>
          <Svg w={19} h={19}>
            <path d="M1.3 17.7 2.5 13.3A7.8 7.8 0 1 1 5.5 16.5Z" stroke="#25c866" strokeWidth="1.8" />
            <path d="M6.2 5.5 7.5 5.3 8.5 7.5 7.7 8.7Q8.7 10.5 10.7 11.2L11.8 10.2 13.8 11.2Q13.5 13.7 11.3 13.5 6.3 12.7 5.3 7.7Z" fill="#25c866" />
          </Svg>
          <div className="absolute top-[4px] left-[16px] flex h-[13px] w-[15px] items-center justify-center rounded-full bg-[#d2a0dc] text-[8.5px] text-[#222]">62</div>
        </TaskButton>
        <TaskButton mark={dot}>
          <Svg w={18} h={18}>
            <circle cx="9" cy="9" r="9" fill="#22d262" />
            <path d="M3.8 6.3Q9.5 4.6 14.4 7.2" stroke="#1c2919" strokeWidth="1.8" strokeLinecap="round" />
            <path d="M4.3 9.3Q9.3 7.9 13.5 10.1" stroke="#1c2919" strokeWidth="1.4" strokeLinecap="round" />
            <path d="M4.8 12.1Q9 11 12.6 12.9" stroke="#1c2919" strokeWidth="1.2" strokeLinecap="round" />
          </Svg>
        </TaskButton>
        <TaskButton>
          <Svg w={18} h={18}>
            <circle cx="9" cy="9" r="9" fill="#ee3c1d" />
            <path d="M3 5.5H5L6.7 12.5 9 6.5H10.5L11.8 12.5 15.2 5.5H9.5M7.5 5.5 9.2 10" stroke="#fff" strokeWidth="1.3" />
          </Svg>
        </TaskButton>
        <TaskButton mark="w-[5px] bg-[#f59aa5]" className="border-r-2 border-[#683b3f] bg-[#8a4b51]">
          <Svg w={16} h={16}>
            <path d="M0 0H16V8.5L8.5 16H0Z" fill="#fcd307" />
            <path d="M16 8.5H8.5V16Z" fill="#4c4736" />
          </Svg>
        </TaskButton>
        <TaskButton mark={dot}>
          <Svg w={15} h={16}>
            <path d="M.5 1.5 11 .5 14.5 3V15L3.5 15.8.5 12.5Z" fill="#f4f4f4" stroke="#d6d6d6" strokeWidth=".5" />
            <path d="M3 4 14 3.3V14.3L3.5 15Z" fill="#fff" stroke="#222" strokeWidth=".9" />
            <path d="M6 12.5V6L11 12.3V5.5M5 6H7M10 5.5H12M5 12.5H7" stroke="#222" strokeWidth="1.2" />
          </Svg>
        </TaskButton>
        <TaskButton mark={dot}>
          <Svg w={18} h={18}>
            <path d="M3 0H18V11Q18 18 10 18 0 18 0 10V3Q0 0 3 0Z" fill="#30b824" />
            <path d="M3 0H18V8Q9 12 0 5V3Q0 0 3 0Z" fill="#58d62d" />
            <path d="M2.5 3Q7 3.5 14.5 12L11.8 14.5Q4 8 2.5 3Z" fill="#fff" />
          </Svg>
        </TaskButton>
        <TaskButton mark="w-[12px] bg-[#d7a3dd]" className="bg-[#37362c]">
          <Svg w={19} h={17}>
            <path d="M5 1Q5 0 6 0H18Q19 0 19 1V5H5Z" fill="#3da0ea" />
            <path d="M5 4.3H19V8.5H5Z" fill="#2b7ad2" /><path d="M5 8.5H19V12.7H5Z" fill="#195abd" />
            <path d="M5 12.7H19V16Q19 17 18 17H6Q5 17 5 16Z" fill="#14428f" />
            <rect x="0" y="3.5" width="9.5" height="9.5" rx="1" fill="#185abd" />
            <path d="M2 5.8 3.3 10.7 4.7 6.5 6.1 10.7 7.5 5.8" stroke="#fff" />
          </Svg>
        </TaskButton>
      </div>
      <Svg w={9} h={6} className="ml-[51px]"><path d="M.8 5 4.5 1.3 8.2 5" stroke="currentColor" strokeWidth="1.2" /></Svg>
      <Svg w={13} h={9} className="ml-[13.5px]">
        <path d="M3 8.5A2.8 2.8 0 0 1 2.5 3.3 4 4 0 0 1 9.5 2.8 3 3 0 1 1 10 8.5Z" fill="#d8d8d8" />
        <path d="M3 8.5 9.3 3Q12.8 3 12.5 6 12 8.5 10 8.5Z" fill="#fff" />
      </Svg>
      <div className="ml-[12px] flex w-[20px] shrink-0 flex-col items-start text-[9px] leading-[11.5px]">
        <Fit w={18}>ENG</Fit>
        <Fit w={19}>INTL</Fit>
      </div>
      <Svg w={13} h={10} className="ml-[11.5px]">
        <path d="M.8 3.7Q6.5-1.5 12.2 3.7M2.7 5.7Q6.5 2.2 10.3 5.7M4.5 7.5Q6.5 5.7 8.5 7.5" stroke="currentColor" strokeWidth="1" />
        <circle cx="6.5" cy="8.9" r="1" fill="currentColor" />
      </Svg>
      <Svg w={13} h={11} className="ml-[5px]">
        <path d="M.6 3.7H2.8L5.7 1V10L2.8 7.3H.6ZM7.5 3.7Q8.8 5.5 7.5 7.3M9 2.2Q11.3 5.5 9 8.8M10.7.8Q13.8 5.5 10.7 10.2" stroke="currentColor" strokeWidth=".9" />
      </Svg>
      <Svg w={13} h={9} className="ml-[5.5px]">
        <rect x=".6" y="1" width="10" height="7" rx="1.5" stroke="currentColor" />
        <path d="M2.2 2.6H5.5V6.4H2.2Z" fill="currentColor" /><path d="M12 3V6" stroke="currentColor" strokeWidth="1.2" />
      </Svg>
      <div className="ml-[11px] flex w-[47px] shrink-0 flex-col items-end text-[9px] leading-[11.5px]">
        <Fit w={21.5}>15:24</Fit>
        <Fit w={46.5}>07/02/2025</Fit>
      </div>
    </div>
  );
}

export default function App() {
  return (
    <div className={`flex h-[540px] w-[960px] flex-col overflow-hidden bg-[#585959] ${UI}`}>
      <TitleBar />
      <Tabs />
      <Ribbon />
      <Ruler />
      <div className="h-[336px] bg-linear-to-b from-[#555656] to-[#58574f]">
        <Page />
      </div>
      <StatusBar />
      <Taskbar />
    </div>
  );
}
